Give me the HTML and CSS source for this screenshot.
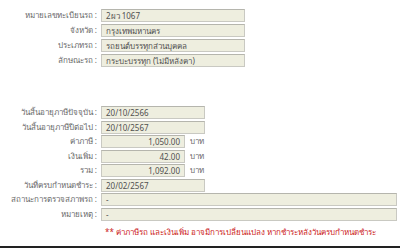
FILE: index.html
```html
<!DOCTYPE html>
<html>
<head>
    <meta charset="UTF-8">
    <title>ตรวจสอบภาษีรถ</title>
    <link rel="stylesheet" href="styles.css">
</head>
<body>
    <div class="page">
        <!-- ข้อมูลรถ -->
        <div class="group car-info">
            <div class="row"><label>หมายเลขทะเบียนรถ :</label><div class="field w-mid">2ผว 1067</div></div>
            <div class="row"><label>จังหวัด :</label><div class="field w-mid">กรุงเทพมหานคร</div></div>
            <div class="row"><label>ประเภทรถ :</label><div class="field w-mid">รถยนต์บรรทุกส่วนบุคคล</div></div>
            <div class="row"><label>ลักษณะรถ :</label><div class="field w-mid">กระบะบรรทุก (ไม่มีหลังคา)</div></div>
        </div>

        <!-- ข้อมูลภาษี -->
        <div class="group tax-info">
            <div class="row"><label>วันสิ้นอายุภาษีปัจจุบัน :</label><div class="field w-date">20/10/2566</div></div>
            <div class="row"><label>วันสิ้นอายุภาษีปีต่อไป :</label><div class="field w-date">20/10/2567</div></div>
            <div class="row"><label>ค่าภาษี :</label><div class="field w-amount">1,050.00</div><span class="unit">บาท</span></div>
            <div class="row"><label>เงินเพิ่ม :</label><div class="field w-amount">42.00</div><span class="unit">บาท</span></div>
            <div class="row"><label>รวม :</label><div class="field w-amount">1,092.00</div><span class="unit">บาท</span></div>
            <div class="row"><label>วันที่ครบกำหนดชำระ :</label><div class="field w-date">20/02/2567</div></div>
            <div class="row"><label>สถานะการตรวจสภาพรถ :</label><div class="field w-wide">-</div></div>
            <div class="row"><label>หมายเหตุ :</label><div class="field w-wide">-</div></div>
            <div class="note">** ค่าภาษีรถ และเงินเพิ่ม อาจมีการเปลี่ยนแปลง หากชำระหลังวันครบกำหนดชำระ</div>
        </div>
    </div>
    <div class="bottom-line"></div>
</body>
</html>
```

FILE: styles.css
```css
body {
    margin: 0;
    background: #ffffff;
    font-family: Tahoma, "Noto Sans", "DejaVu Sans", sans-serif;
    font-size: 8px;
    color: #555555;
}

.page {
    padding-top: 9px;
    height: 237px;
}

.group {
    display: flex;
    flex-direction: column;
}

.car-info {
    gap: 2px;
}

.tax-info {
    margin-top: 39px;
    gap: 1.5px;
}

.row {
    display: flex;
    align-items: center;
    height: 13px;
}

.row label {
    width: 97px;
    text-align: right;
    color: #6a6a6a;
    white-space: nowrap;
}

.field {
    margin-left: 4px;
    height: 13px;
    box-sizing: border-box;
    padding: 0 4px;
    line-height: 11px;
    background: #eeeedf;
    border: 1px solid #c9c9c2;
    border-top-color: #b5b5ad;
    color: #505050;
    white-space: nowrap;
    overflow: hidden;
}

.w-mid {
    width: 144px;
}

.w-date {
    width: 104px;
}

.w-amount {
    width: 84px;
    text-align: right;
}

.w-wide {
    width: 296px;
}

.unit {
    margin-left: 5px;
    color: #6a6a6a;
}

.note {
    margin-top: 4px;
    padding-left: 105px;
    color: #cc2222;
    white-space: nowrap;
}

.bottom-line {
    height: 2px;
    background: #222222;
}
```
